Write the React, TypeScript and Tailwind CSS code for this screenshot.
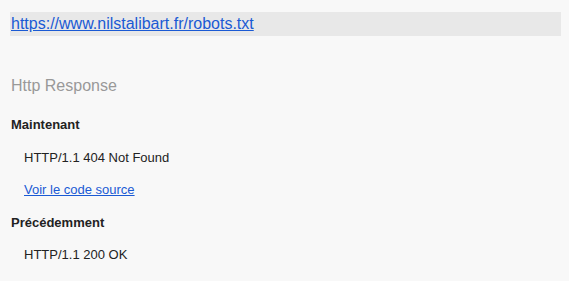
export default function App() {
  return (
    <div className="min-h-[281px] w-full bg-[#f8f8f8] pl-[10px] pr-2 pt-3 text-[13px] text-[#222] [font-family:'Liberation_Sans',Arial,sans-serif]">
      <div className="flex h-6 w-[551px] items-center bg-[#e8e8e8] px-[1px]">
        <a href="#" className="text-[16px] text-[#1a5ad4] underline">https://www.nilstalibart.fr/robots.txt</a>
      </div>
      <div className="mt-[40px] pl-[1px] text-[16px] leading-5 text-[#999]">Http Response</div>
      <div className="mt-[21px] pl-[1px] font-bold leading-4">Maintenant</div>
      <div className="mt-[17px] pl-[14px] leading-4">HTTP/1.1 404 Not Found</div>
      <div className="mt-4 pl-[14px] leading-4">
        <a href="#" className="text-[#1a5ad4] underline">Voir le code source</a>
      </div>
      <div className="mt-[17px] pl-[1px] font-bold leading-4">Précédemment</div>
      <div className="mt-4 pl-[14px] leading-4">HTTP/1.1 200 OK</div>
    </div>
  );
}
